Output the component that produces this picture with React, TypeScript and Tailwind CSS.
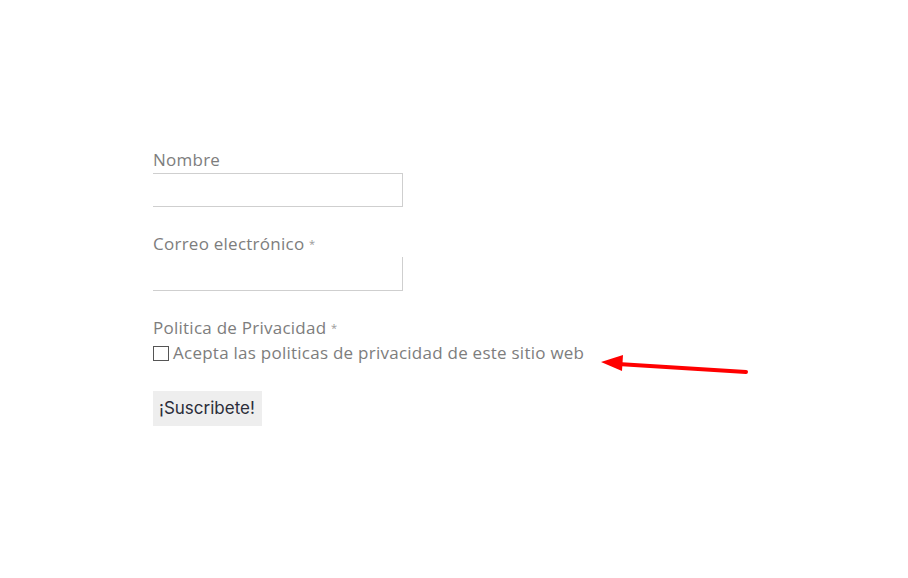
export default function App() {
  return (
    <div className="relative w-[908px] h-[578px] bg-white" style={{ fontFamily: '"Open Sans", "Noto Sans", sans-serif' }}>
      <form className="flex flex-col pl-[153px] pt-[150px]">
        <label className="text-[17px] leading-[20px] tracking-[0.25px] text-[#7d7d7d]">Nombre</label>
        <div className="mt-[3px] w-[250px] h-[34px] border-t border-r border-b border-[#cfcfcf]" />

        <label className="mt-[27px] text-[17px] leading-[20px] tracking-[0.25px] text-[#7d7d7d]">
          Correo electrónico <span className="text-[11px] align-top text-[#999]">*</span>
        </label>
        <div className="mt-[3px] w-[250px] h-[34px] border-r border-b border-[#cfcfcf]" />

        <label className="mt-[27px] text-[17px] leading-[20px] tracking-[0.25px] text-[#7d7d7d]">
          Politica de Privacidad <span className="text-[11px] align-top text-[#999]">*</span>
        </label>
        <div className="mt-[5px] flex items-center gap-[4px]">
          <span className="w-[16px] h-[15px] border border-[#555] bg-white" />
          <span className="text-[17px] leading-[20px] tracking-[0.25px] text-[#7d7d7d]">Acepta las politicas de privacidad de este sitio web</span>
        </div>

        <button
          type="button"
          className="mt-[28px] w-[109px] h-[35px] bg-[#eeeeee] text-[17px] text-[#2b2d3a] text-left pl-[6px]"
          style={{ fontFamily: 'Inter, "Noto Sans", sans-serif' }}
        >
          ¡Suscribete!
        </button>
      </form>

      <svg className="absolute left-0 top-0" width="908" height="578" viewBox="0 0 908 578">
        <line x1="746" y1="372" x2="618" y2="364" stroke="#ff0000" strokeWidth="4" strokeLinecap="round" />
        <polygon points="601,362 623,355 622,371" fill="#ff0000" />
      </svg>
    </div>
  );
}
